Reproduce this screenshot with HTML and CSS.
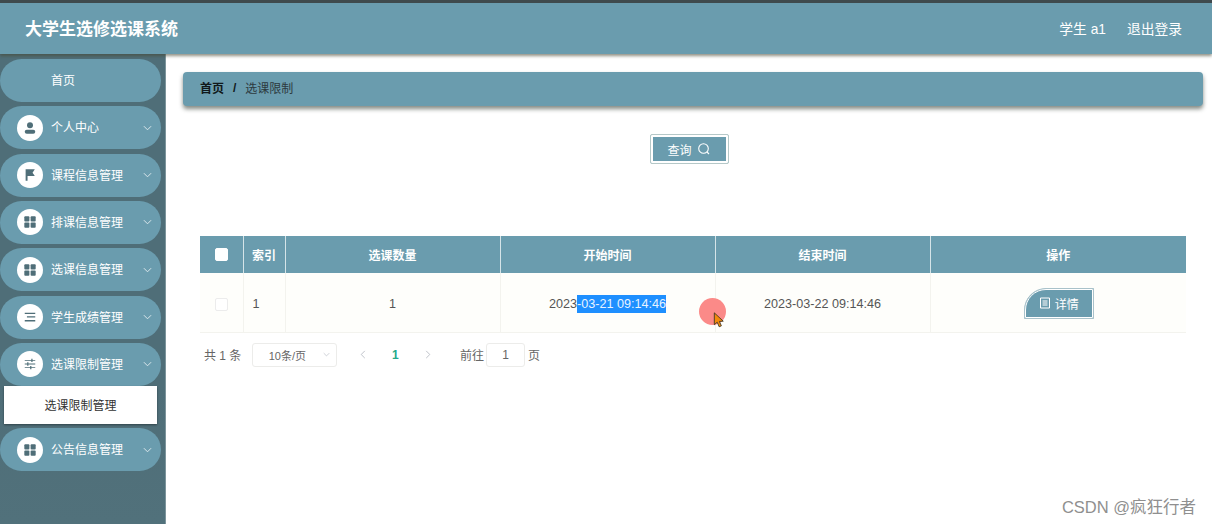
FILE: index.html
```html
<!DOCTYPE html>
<html lang="zh-CN">

<head>
    <meta charset="UTF-8">
    <meta name="viewport" content="width=device-width, initial-scale=1.0">
    <title>大学生选修选课系统</title>
    <link rel="stylesheet" href="styles.css">
</head>

<body>
    <svg class="sprite" width="0" height="0">
        <symbol id="icon-grid" viewBox="0 0 16 16">
            <rect x="1.5" y="1.5" width="5.8" height="5.8" rx="1" />
            <rect x="8.7" y="1.5" width="5.8" height="5.8" rx="1" />
            <rect x="1.5" y="8.7" width="5.8" height="5.8" rx="1" />
            <rect x="8.7" y="8.7" width="5.8" height="5.8" rx="1" />
        </symbol>
        <symbol id="icon-chevron" viewBox="0 0 10 6">
            <path d="M1 1l4 4 4-4" fill="none" stroke="currentColor" stroke-width="1.1" />
        </symbol>
    </svg>

    <header class="topbar">
        <div class="topbar-title">大学生选修选课系统</div>
        <div class="topbar-user">
            <span>学生 a1</span>
            <span>退出登录</span>
        </div>
    </header>

    <div class="layout">
        <aside class="sidebar">
            <div class="menu-item menu-home"><span class="menu-label">首页</span></div>
            <div class="menu-item">
                <span class="menu-icon">
                    <svg viewBox="0 0 16 16">
                        <circle cx="8" cy="4.8" r="3.4" />
                        <rect x="2" y="10" width="12" height="4.6" rx="2.3" />
                    </svg>
                </span>
                <span class="menu-label">个人中心</span>
                <svg class="menu-arrow"><use href="#icon-chevron" /></svg>
            </div>
            <div class="menu-item">
                <span class="menu-icon">
                    <svg viewBox="0 0 16 16">
                        <path d="M3 1.5h10.5l-2.6 3.8 2.6 3.8H5.2v5.4H3z" />
                    </svg>
                </span>
                <span class="menu-label">课程信息管理</span>
                <svg class="menu-arrow"><use href="#icon-chevron" /></svg>
            </div>
            <div class="menu-item">
                <span class="menu-icon"><svg><use href="#icon-grid" /></svg></span>
                <span class="menu-label">排课信息管理</span>
                <svg class="menu-arrow"><use href="#icon-chevron" /></svg>
            </div>
            <div class="menu-item">
                <span class="menu-icon"><svg><use href="#icon-grid" /></svg></span>
                <span class="menu-label">选课信息管理</span>
                <svg class="menu-arrow"><use href="#icon-chevron" /></svg>
            </div>
            <div class="menu-item">
                <span class="menu-icon">
                    <svg viewBox="0 0 16 16">
                        <path d="M2 3h12v1.5H2zM4.5 7.2H14v1.5H4.5zM2 11.5h12V13H2z" />
                    </svg>
                </span>
                <span class="menu-label">学生成绩管理</span>
                <svg class="menu-arrow"><use href="#icon-chevron" /></svg>
            </div>
            <div class="menu-item">
                <span class="menu-icon">
                    <svg viewBox="0 0 16 16">
                        <path d="M2 3.4h12v1H2zM2 7.5h12v1H2zM2 11.6h12v1H2z" />
                        <path d="M9.5 2h1.4v3.8H9.5zM4.8 6.1h1.4v3.8H4.8zM8.2 10.2h1.4V14H8.2z" />
                    </svg>
                </span>
                <span class="menu-label">选课限制管理</span>
                <svg class="menu-arrow"><use href="#icon-chevron" /></svg>
            </div>
            <div class="submenu-item">选课限制管理</div>
            <div class="menu-item">
                <span class="menu-icon"><svg><use href="#icon-grid" /></svg></span>
                <span class="menu-label">公告信息管理</span>
                <svg class="menu-arrow"><use href="#icon-chevron" /></svg>
            </div>
        </aside>

        <main class="content">
            <div class="breadcrumb">
                <b>首页</b>
                <i>/</i>
                <span>选课限制</span>
            </div>

            <div class="search-row">
                <button class="btn-search" type="button">
                    查询
                    <svg viewBox="0 0 14 14">
                        <circle cx="6.5" cy="6.5" r="4.8" fill="none" stroke="currentColor" stroke-width="1.1" />
                        <path d="M10 10l2 2" stroke="currentColor" stroke-width="1.1" />
                    </svg>
                </button>
            </div>

            <table class="data-table">
                <colgroup>
                    <col class="col-check">
                    <col class="col-index">
                    <col class="col-wide">
                    <col class="col-wide">
                    <col class="col-wide">
                    <col>
                </colgroup>
                <thead>
                    <tr>
                        <th><span class="checkbox checkbox-head"></span></th>
                        <th>索引</th>
                        <th>选课数量</th>
                        <th>开始时间</th>
                        <th>结束时间</th>
                        <th>操作</th>
                    </tr>
                </thead>
                <tbody>
                    <tr>
                        <td><span class="checkbox"></span></td>
                        <td class="cell-index">1</td>
                        <td>1</td>
                        <td>2023<span class="selected-text">-03-21 09:14:46</span></td>
                        <td>2023-03-22 09:14:46</td>
                        <td>
                            <button class="btn-detail" type="button">
                                <svg viewBox="0 0 12 12">
                                    <path d="M1.5 1h9v10h-9zM3.5 4h5M3.5 6h5M3.5 8h5" fill="none" stroke="currentColor" stroke-width="1" />
                                </svg>
                                详情
                            </button>
                        </td>
                    </tr>
                </tbody>
            </table>

            <div class="pagination">
                <span class="page-total">共 1 条</span>
                <span class="page-size">10条/页<svg class="page-size-arrow"><use href="#icon-chevron" /></svg></span>
                <svg class="page-nav" viewBox="0 0 6 10"><path d="M5 1L1 5l4 4" fill="none" stroke="currentColor" /></svg>
                <span class="page-current">1</span>
                <svg class="page-nav" viewBox="0 0 6 10"><path d="M1 1l4 4-4 4" fill="none" stroke="currentColor" /></svg>
                <span class="page-jump">前往</span>
                <span class="page-input">1</span>
                <span>页</span>
            </div>
        </main>
    </div>

    <div class="cursor-mark">
        <svg viewBox="0 0 14 20">
            <path d="M1.5 1v14l3.4-3 2.3 5.4 2.6-1.1-2.3-5.2 4.5-.3z" fill="#f28a0c" stroke="#3a3320" stroke-width="1" />
        </svg>
    </div>

    <div class="watermark">CSDN @疯狂行者</div>
</body>

</html>
```

FILE: styles.css
```css
:root {
    --primary-color: #6a9cae;
    --sidebar-color: #4f6e78;
    --text-color: #555;
    --line-color: #f3f3ee;
}

* {
    box-sizing: border-box;
}

html,
body {
    height: 100%;
}

body {
    margin: 0;
    position: relative;
    display: flex;
    flex-direction: column;
    overflow: hidden;
    font-family: "Liberation Sans", "Noto Sans CJK SC", sans-serif;
    font-size: 12px;
    color: var(--text-color);
    background-color: #fff;
    border-top: 3px solid #3f4a4d;
}

.sprite {
    position: absolute;
}

.topbar {
    flex: none;
    height: 51px;
    display: flex;
    align-items: center;
    justify-content: space-between;
    padding: 0 30px 2px 25px;
    color: #fff;
    background-color: var(--primary-color);
    box-shadow: 0 2px 3px rgba(70, 70, 50, 0.6);
    position: relative;
    z-index: 2;
}

.topbar-title {
    font-size: 17px;
    font-weight: bold;
}

.topbar-user {
    display: flex;
    gap: 21px;
    font-size: 13.75px;
}

.layout {
    flex: 1;
    display: flex;
    min-height: 0;
}

.sidebar {
    flex: none;
    width: 166px;
    padding: 5px 4px 0 0;
    display: flex;
    flex-direction: column;
    gap: 4.33px;
    background: linear-gradient(180deg, #4f6e78, #4f6e78 70%, #51717b);
    border-right: 1px solid #7d959c;
}

.menu-item {
    flex: none;
    height: 43px;
    display: flex;
    align-items: center;
    padding: 0 9px 0 17px;
    color: #fff;
    background-color: var(--primary-color);
    border-radius: 22px;
}

.menu-home .menu-label {
    margin-left: 34px;
}

.menu-icon {
    flex: none;
    width: 26px;
    height: 26px;
    margin-right: 8px;
    display: flex;
    align-items: center;
    justify-content: center;
    background-color: #fff;
    border-radius: 50%;
}

.menu-icon svg {
    width: 14px;
    height: 14px;
    fill: var(--sidebar-color);
}

.menu-label {
    flex: 1;
    padding-bottom: 2px;
    white-space: nowrap;
}

.menu-arrow {
    flex: none;
    width: 9px;
    height: 6px;
    color: #dbe8ec;
}

.submenu-item {
    flex: none;
    height: 38px;
    margin: -4.33px 0 0 4px;
    width: 153px;
    display: flex;
    align-items: center;
    justify-content: center;
    padding-bottom: 1px;
    color: #333;
    background-color: #fff;
    box-shadow: 0 1px 2px rgba(0, 0, 0, 0.4);
}

.content {
    flex: 1;
    min-width: 0;
    padding: 18px 9px 0 17px;
}

.breadcrumb {
    height: 34px;
    display: flex;
    align-items: center;
    gap: 9px;
    padding: 0 0 3px 17px;
    color: #2d3a3e;
    background-color: var(--primary-color);
    border-radius: 4px;
    box-shadow: 0 3px 4px rgba(50, 60, 50, 0.6);
}

.breadcrumb b {
    color: #10181a;
}

.breadcrumb i {
    font-style: normal;
    font-weight: bold;
    color: #10181a;
}

.search-row {
    display: flex;
    justify-content: center;
    margin: 28px 8px 0 0;
}

.btn-search {
    width: 79px;
    height: 30px;
    display: flex;
    align-items: center;
    justify-content: center;
    gap: 5px;
    padding: 0;
    font: inherit;
    color: #fff;
    background-color: var(--primary-color);
    border: 1px solid #b5c8c8;
    outline: 2px solid #fff;
    outline-offset: -3px;
    border-radius: 2px;
}

.btn-search svg {
    width: 14px;
    height: 14px;
}

.data-table {
    width: 986px;
    height: 96px;
    margin: 72px 0 0 17px;
    border-collapse: collapse;
    table-layout: fixed;
    background-color: #fefefb;
}

.col-check {
    width: 43px;
}

.col-index {
    width: 42px;
}

.col-wide {
    width: 215px;
}

.data-table th {
    height: 37px;
    padding: 0 0 1px;
    color: #fff;
    font-weight: bold;
    background-color: var(--primary-color);
    border-left: 1px solid #d5e4e8;
}

.data-table th:first-child {
    border-left: none;
}

.data-table td {
    height: 59px;
    padding: 4px 0 0;
    text-align: center;
    font-size: 12.6px;
    color: var(--text-color);
    border-left: 1px solid var(--line-color);
    border-bottom: 1px solid var(--line-color);
}

.data-table td:first-child {
    border-left: none;
}

.data-table td.cell-index {
    text-align: left;
    padding-left: 9px;
}

.checkbox {
    display: inline-block;
    width: 13px;
    height: 13px;
    vertical-align: middle;
    background-color: #fff;
    border: 1px solid #ececec;
    border-radius: 2px;
}

.checkbox-head {
    border-color: #fff;
}

.selected-text {
    padding: 2px 0;
    color: #e8f3ff;
    background-color: #1e8fff;
}

.btn-detail {
    width: 70px;
    height: 31px;
    margin: 0 0 2px 1px;
    display: inline-flex;
    align-items: center;
    justify-content: center;
    gap: 4px;
    padding: 0;
    font: inherit;
    font-size: 12px;
    color: #fff;
    background-color: var(--primary-color);
    border: 1px solid #a9c2ca;
    outline: 1px solid #fff;
    outline-offset: -2px;
    border-radius: 22px 0 0 0;
}

.btn-detail svg {
    width: 12px;
    height: 12px;
}

.pagination {
    display: flex;
    align-items: center;
    height: 24px;
    margin: 10px 0 0 21px;
    color: #666;
    white-space: nowrap;
}

.page-total {
    width: 48px;
}

.page-size {
    width: 85px;
    height: 24px;
    display: flex;
    align-items: center;
    justify-content: flex-end;
    gap: 6px;
    padding-right: 6px;
    font-size: 11px;
    background-color: #fff;
    border: 1px solid #ececea;
    border-radius: 3px;
}

.page-size-arrow {
    width: 7px;
    height: 5px;
    margin-left: 11px;
    color: #c0c4cc;
}

.page-nav {
    width: 6px;
    height: 9px;
    margin-left: 23px;
    color: #b8bcc4;
}

.page-current {
    width: 6px;
    margin-left: 26px;
    font-weight: bold;
    color: #25a98a;
}

.page-current + .page-nav {
    margin-left: 27px;
}

.page-jump {
    margin-left: 29px;
}

.page-input {
    width: 39px;
    height: 24px;
    margin: 0 3px 0 2px;
    display: flex;
    align-items: center;
    justify-content: center;
    background-color: #fff;
    border: 1px solid #ececea;
    border-radius: 3px;
}

.cursor-mark {
    position: absolute;
    left: 699px;
    top: 295px;
    width: 27px;
    height: 27px;
    background-color: #fb8a88;
    border-radius: 50%;
}

.cursor-mark svg {
    position: absolute;
    left: 14px;
    top: 14px;
    width: 12px;
    height: 17px;
}

.watermark {
    position: absolute;
    right: 16px;
    bottom: 6px;
    font-size: 16.5px;
    color: #8f8f8f;
}
```
